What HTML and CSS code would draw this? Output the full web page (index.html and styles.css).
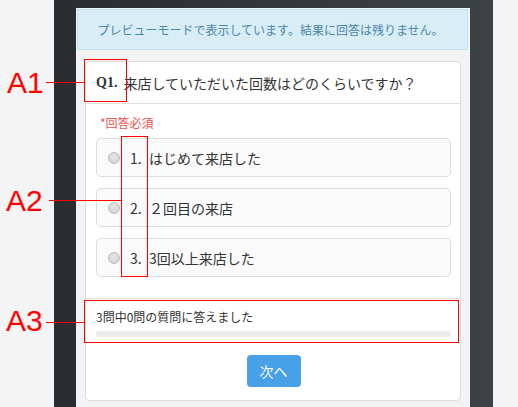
FILE: index.html
```html
<!DOCTYPE html>
<html lang="ja">
<head>
<meta charset="utf-8">
<title>アンケート プレビュー</title>
<link rel="stylesheet" href="styles.css">
</head>
<body>
<div class="page">
  <div class="phone">
    <div class="screen">
      <div class="notice">プレビューモードで表示しています。結果に回答は残りません。</div>
      <div class="card">
        <div class="q-head">
          <span class="q-no">Q1.</span>
          <span class="q-text">来店していただいた回数はどのくらいですか？</span>
        </div>
        <div class="q-body">
          <div class="required">*回答必須</div>
          <div class="options">
            <label class="option"><span class="radio"></span><span class="num">1.</span><span class="opt-text">はじめて来店した</span></label>
            <label class="option"><span class="radio"></span><span class="num">2.</span><span class="opt-text">２回目の来店</span></label>
            <label class="option"><span class="radio"></span><span class="num">3.</span><span class="opt-text">3回以上来店した</span></label>
          </div>
        </div>
        <div class="progress">
          <div class="progress-text">3問中0問の質問に答えました</div>
          <div class="bar"></div>
          <div class="actions"><button class="next" type="button">次へ</button></div>
        </div>
      </div>
    </div>
  </div>

  <div class="anno-box box-a1"></div>
  <div class="anno-box box-a2"></div>
  <div class="anno-box box-a3"></div>
  <div class="anno-line line-a1"></div>
  <div class="anno-line line-a2"></div>
  <div class="anno-line line-a3"></div>
  <div class="anno-label label-a1">A1</div>
  <div class="anno-label label-a2">A2</div>
  <div class="anno-label label-a3">A3</div>
</div>
</body>
</html>
```
FILE: styles.css
```css
html, body {
  margin: 0;
  padding: 0;
}

body {
  background: #f4f4f4;
  font-family: "Noto Sans CJK JP", "Noto Sans", sans-serif;
  color: #333;
  overflow: hidden;
}

.page {
  position: relative;
  height: 407px;
  padding-left: 54px;
}

.phone {
  width: 439px;
  height: 407px;
  box-sizing: border-box;
  padding: 8px 23px 0 22px;
  background: linear-gradient(to right, #292d30, #3d4245);
}

.screen {
  height: 100%;
  box-sizing: border-box;
  padding: 1px 2px 0 1px;
  background: #f3f3f3;
}

.notice {
  height: 41px;
  box-sizing: border-box;
  border: 1px solid #bfe5f2;
  background: #d9edf7;
  color: #4a86aa;
  font-size: 12px;
  display: flex;
  align-items: center;
  justify-content: center;
  padding-right: 4px;
}

.card {
  margin: 11px 7px 0 8px;
  background: #fff;
  border: 1px solid #dcdcdc;
  border-radius: 5px;
}

.q-head {
  height: 42px;
  box-sizing: border-box;
  border-bottom: 1px solid #e0e0e0;
  display: flex;
  align-items: center;
  padding: 0 10px;
  font-size: 14px;
  color: #333;
}

.q-no {
  font-family: "Liberation Serif", serif;
  font-weight: bold;
  font-size: 14px;
  margin-right: 6px;
}

.q-body {
  padding: 10px 9px 21px 10px;
  border-bottom: 1px solid #dcdcdc;
}

.required {
  font-size: 12px;
  line-height: 17px;
  color: #e8534f;
  padding-left: 4px;
  margin-bottom: 7px;
}

.options {
  display: flex;
  flex-direction: column;
  gap: 11px;
}

.option {
  height: 39px;
  box-sizing: border-box;
  border: 1px solid #dddddd;
  border-radius: 5px;
  background: #fafafa;
  display: flex;
  align-items: center;
  padding-left: 11px;
  font-size: 14px;
  color: #333;
}

.radio {
  width: 12px;
  height: 12px;
  box-sizing: border-box;
  border-radius: 50%;
  border: 1px solid #bdbdbd;
  background: radial-gradient(circle at 50% 35%, #e6e6e6, #cfcfcf);
  margin-right: 10px;
  flex: none;
}

.num {
  width: 19px;
  flex: none;
}

.progress {
  padding: 9px 9px 13px 10px;
}

.progress-text {
  font-size: 12px;
  line-height: 17px;
  color: #333;
}

.bar {
  margin-top: 6px;
  height: 6px;
  border-radius: 3px;
  background: #ececec;
}

.actions {
  margin-top: 18px;
  display: flex;
  justify-content: center;
}

.next {
  width: 54px;
  height: 32px;
  border: none;
  border-radius: 4px;
  background: #48a0e6;
  color: #fff;
  font-family: "Noto Sans CJK JP", "Noto Sans", sans-serif;
  font-size: 14px;
  padding: 0;
}

/* annotations */
.anno-box {
  position: absolute;
  box-sizing: border-box;
  border: 1px solid #ff0000;
}

.box-a1 { left: 84px; top: 59px; width: 43px; height: 43px; }
.box-a2 { left: 121px; top: 136px; width: 27px; height: 141px; }
.box-a3 { left: 84px; top: 300px; width: 375px; height: 43px; }

.anno-line {
  position: absolute;
  height: 1px;
  background: #ff0000;
}

.line-a1 { left: 46px; top: 82px; width: 38px; }
.line-a2 { left: 49px; top: 200px; width: 72px; }
.line-a3 { left: 46px; top: 322px; width: 38px; }

.anno-label {
  position: absolute;
  font-family: "Liberation Sans", Arial, sans-serif;
  font-size: 30px;
  line-height: 30px;
  color: #ff0000;
}

.label-a1 { left: 7px; top: 68px; }
.label-a2 { left: 6px; top: 186px; }
.label-a3 { left: 6px; top: 306px; }
```
